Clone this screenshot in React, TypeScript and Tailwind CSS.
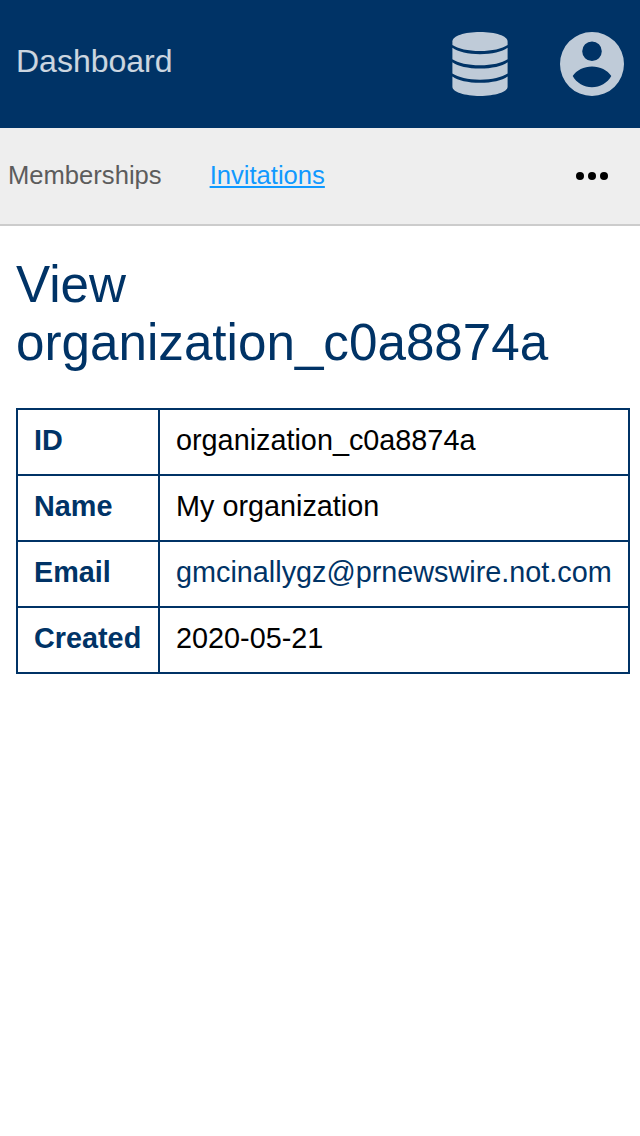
import React from "react";

const rows = [
  { label: "ID", value: "organization_c0a8874a" },
  { label: "Name", value: "My organization" },
  { label: "Email", value: "gmcinallygz@prnewswire.not.com", href: "mailto:gmcinallygz@prnewswire.not.com" },
  { label: "Created", value: "2020-05-21" },
];

function DatabaseIcon() {
  return (
    <svg viewBox="0 0 56 64" className="h-16 w-14" fill="currentColor" aria-hidden="true">
      <path d="M.4 9.5C.4 4 12.5 0 28 0S55.6 4 55.6 9.5V13C50 16.8 40 19 28 19S6 16.8.4 13z" />
      <path d="M.4 15.8C6 19.8 16 22.2 28 22.2S50 19.8 55.6 15.8V27.3C50 31 40 33.3 28 33.3S6 31 .4 27.3z" />
      <path d="M.4 30.2C6 34.2 16 36.5 28 36.5S50 34.2 55.6 30.2V41.6C50 45.3 40 47.7 28 47.7S6 45.3.4 41.6z" />
      <path d="M.4 44.5C6 48.5 16 50.8 28 50.8S50 48.5 55.6 44.5V54.8C55.6 60 43 64 28 64S.4 60 .4 54.8z" />
    </svg>
  );
}

function AccountIcon() {
  return (
    <svg viewBox="0 0 64 64" className="size-16" fill="currentColor" aria-hidden="true">
      <path
        fillRule="evenodd"
        d="M32 0a32 32 0 1 0 0 64 32 32 0 0 0 0-64zm0 9.4a9.8 9.8 0 1 1 0 19.6 9.8 9.8 0 0 1 0-19.6zM12.7 44C16.5 38.4 24 34.6 32 34.6S47.5 38.4 51.3 44C47.5 51 40 55.2 32 55.2S16.5 51 12.7 44z"
      />
    </svg>
  );
}

export default function App() {
  return (
    <div className="min-h-[1136px] w-[640px] overflow-hidden bg-white font-['Liberation_Sans',sans-serif] text-black">
      <header className="flex h-32 items-center justify-between bg-[#003366] px-4">
        <a className="pb-1.5 text-[32px] leading-10 text-white/80">Dashboard</a>
        <div className="flex items-center gap-[52px] text-white/75">
          <DatabaseIcon />
          <AccountIcon />
        </div>
      </header>
      <nav className="flex h-[98px] items-center justify-between border-b-2 border-[#cccccc] bg-[#eeeeee] pr-8 pl-2 text-[25.6px] leading-8">
        <div className="flex gap-12 pb-0.5">
          <a className="text-[#5c5c5c]">Memberships</a>
          <a className="text-[#1199ff] underline">Invitations</a>
        </div>
        <svg viewBox="0 0 32 8" className="h-2 w-8" aria-label="More">
          <circle cx="4" cy="4" r="4" />
          <circle cx="16" cy="4" r="4" />
          <circle cx="28" cy="4" r="4" />
        </svg>
      </nav>
      <main className="px-4 pt-[30px]">
        <h1 className="mb-9 text-[51.2px] leading-[58px] text-[#003366]">
          View<br />organization_c0a8874a
        </h1>
        <table className="w-[614px] table-fixed border-collapse text-[28.8px] leading-8">
          <colgroup>
            <col className="w-[142px]" />
            <col />
          </colgroup>
          <tbody>
            {rows.map((row) => (
              <tr key={row.label} className="h-[66px]">
                <th className="border-2 border-[#003366] px-4 pt-0 pb-1 text-left text-[#003366]">{row.label}</th>
                <td className="border-2 border-[#003366] px-4 pt-0 pb-1 whitespace-nowrap">
                  {row.href ? <a href={row.href} className="text-[#003366]">{row.value}</a> : row.value}
                </td>
              </tr>
            ))}
          </tbody>
        </table>
      </main>
    </div>
  );
}
